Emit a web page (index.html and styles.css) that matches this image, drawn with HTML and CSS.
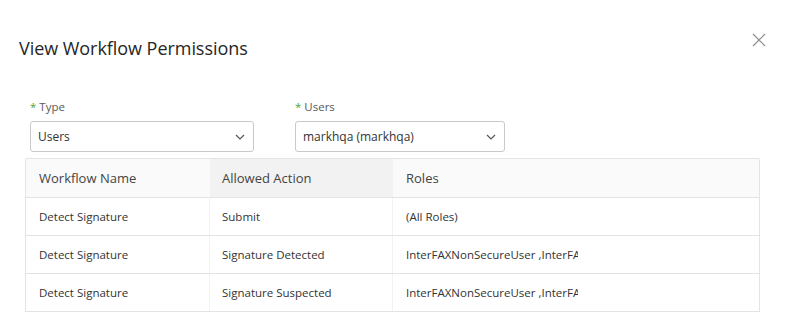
FILE: index.html
```html
<!DOCTYPE html>
<html>
<head>
<meta charset="utf-8">
<link rel="stylesheet" href="styles.css">
</head>
<body>
<div class="modal">
  <div class="modal-header">
    <h1 class="title">View Workflow Permissions</h1>
    <button class="close" aria-label="Close">
      <svg width="14" height="14" viewBox="0 0 14 14"><path d="M1 1L13 13M13 1L1 13" stroke="#8c8c8c" stroke-width="1.2" fill="none"/></svg>
    </button>
  </div>
  <div class="form-row">
    <div class="field field-type">
      <label class="label"><span class="req">*</span> Type</label>
      <div class="select">
        <span class="value">Users</span>
        <svg class="chev" width="10" height="6" viewBox="0 0 10 6"><path d="M1 1L5 5L9 1" stroke="#555" stroke-width="1.2" fill="none"/></svg>
      </div>
    </div>
    <div class="field field-users">
      <label class="label"><span class="req">*</span> Users</label>
      <div class="select">
        <span class="value">markhqa (markhqa)</span>
        <svg class="chev" width="10" height="6" viewBox="0 0 10 6"><path d="M1 1L5 5L9 1" stroke="#555" stroke-width="1.2" fill="none"/></svg>
      </div>
    </div>
  </div>
  <div class="table">
    <div class="row head">
      <div class="cell c1">Workflow Name</div>
      <div class="cell c2 sorted">Allowed Action</div>
      <div class="cell c3">Roles</div>
    </div>
    <div class="row">
      <div class="cell c1">Detect Signature</div>
      <div class="cell c2">Submit</div>
      <div class="cell c3"><div class="clip">(All Roles)</div></div>
    </div>
    <div class="row">
      <div class="cell c1">Detect Signature</div>
      <div class="cell c2">Signature Detected</div>
      <div class="cell c3"><div class="clip">InterFAXNonSecureUser ,InterFAXSecureUser</div></div>
    </div>
    <div class="row">
      <div class="cell c1">Detect Signature</div>
      <div class="cell c2">Signature Suspected</div>
      <div class="cell c3"><div class="clip">InterFAXNonSecureUser ,InterFAXSecureUser</div></div>
    </div>
  </div>
</div>
</body>
</html>
```
FILE: styles.css
```css
* { box-sizing: border-box; }
html, body { margin: 0; padding: 0; background: #fff; }
body {
  font-family: "Open Sans", "Noto Sans", sans-serif;
  color: #333;
  width: 792px;
  height: 314px;
  overflow: hidden;
}
.modal-header {
  display: flex;
  justify-content: space-between;
  align-items: flex-start;
  padding: 36px 26px 0 19px;
  height: 97px;
}
.title {
  margin: 0;
  font-size: 18px;
  font-weight: 400;
  color: #262626;
  letter-spacing: -0.05px;
  line-height: 24px;
}
.close {
  border: 0;
  background: none;
  padding: 0;
  margin-top: -3px;
  width: 14px;
  height: 14px;
  display: block;
}
.close svg { display: block; }
.form-row {
  display: flex;
  gap: 41px;
  padding-left: 30px;
  height: 61px;
}
.field { display: flex; flex-direction: column; }
.field-type { width: 224px; }
.field-users { width: 210px; }
.label {
  font-size: 11.5px;
  color: #595959;
  line-height: 16px;
  padding-top: 2px;
  height: 24px;
}
.req { color: #52a43a; }
.select {
  height: 31px;
  border: 1px solid #c9c9c9;
  border-radius: 3px;
  display: flex;
  align-items: center;
  justify-content: space-between;
  padding: 0 8px 0 7px;
  font-size: 12px;
  color: #333;
}
.chev { display: block; }
.table {
  margin-left: 25px;
  width: 735px;
  border: 1px solid #e4e4e4;
  border-bottom: 0;
  border-radius: 2px 2px 0 0;
}
.row {
  display: grid;
  grid-template-columns: 184px 183px 1fr;
  height: 38px;
  border-bottom: 1px solid #e3e3e3;
}
.row.head { height: 39px; background: #fafafa; }
.cell {
  display: flex;
  align-items: center;
  padding-left: 13px;
  font-size: 11.5px;
  color: #333;
  border-right: 1px solid #f2f2f2;
}
.cell.c3 { border-right: 0; }
.head .cell {
  font-size: 13px;
  color: #444;
  border-right: 0;
}
.head .cell.sorted { background: #f2f2f2; }
.c2 { padding-left: 12px; }
.clip {
  width: 172px;
  overflow: hidden;
  white-space: nowrap;
}
```
